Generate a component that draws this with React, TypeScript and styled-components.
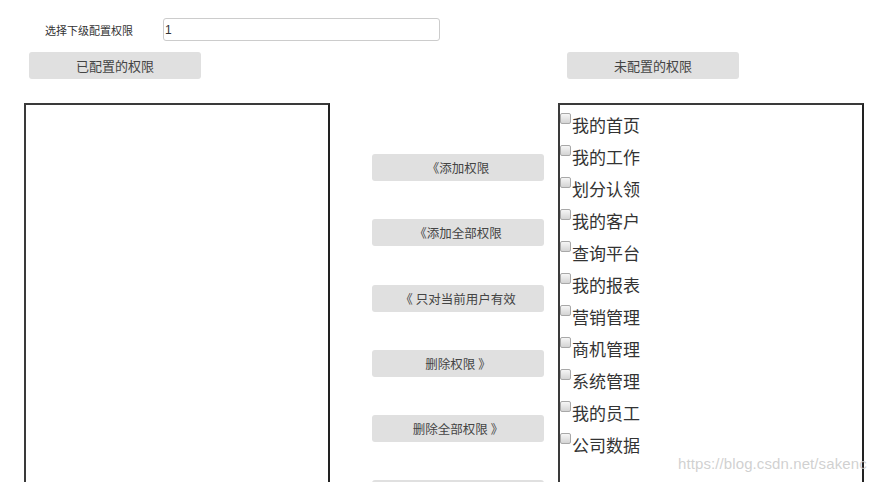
import React from 'react'
import styled, { createGlobalStyle } from 'styled-components'

const GlobalStyle = createGlobalStyle`
    html, body {
        margin: 0;
        padding: 0;
        background: #fff;
        overflow: hidden;
    }
    body {
        font-family: "Noto Sans CJK SC", "Noto Sans", "Liberation Sans", sans-serif;
        color: #333;
    }
`

const Page = styled.div`
    position: relative;
    width: 883px;
    height: 482px;
    overflow: hidden;
`

const FilterRow = styled.div`
    display: flex;
    align-items: center;
    padding: 18px 0 0 45px;
    height: 23px;
`

const FilterLabel = styled.label`
    width: 118px;
    font-size: 11px;
    color: #333;
`

const FilterInput = styled.input`
    box-sizing: border-box;
    width: 277px;
    height: 23px;
    padding: 0 1px;
    border: 1px solid #ccc;
    border-radius: 3px;
    font-family: "Liberation Sans", sans-serif;
    font-size: 12px;
    color: #333;
    outline: none;
`

const Columns = styled.div`
    display: grid;
    grid-template-columns: 306px 214px 320px;
    padding: 11px 0 0 24px;
`

const Column = styled.div<{ gapLeft?: number }>`
    display: flex;
    flex-direction: column;
    margin-left: ${({ gapLeft }) => gapLeft ?? 0}px;
`

const GrayButton = styled.button<{ offset?: number }>`
    box-sizing: border-box;
    flex: none;
    width: 172px;
    height: 27px;
    margin-left: ${({ offset }) => offset ?? 0}px;
    border: none;
    border-radius: 3px;
    background: #e0e0e0;
    color: #444;
    font-family: "Noto Sans CJK SC", sans-serif;
    font-size: 12.5px;
    padding: 0;
    cursor: pointer;
`

const HeaderButton = styled(GrayButton)`
    font-size: 13px;
`

const Box = styled.div`
    box-sizing: border-box;
    width: 306px;
    height: 420px;
    margin-top: 24px;
    border: 2px solid #222;
    border-top-color: #3a3a3a;
    border-left-color: #3a3a3a;
    box-shadow: inset 1px 1px 0 #fff;
    padding: 4px 0 0 0;
`

const Actions = styled.div`
    display: flex;
    flex-direction: column;
    gap: 38.3px;
    margin: 102px 0 0 42px;
`

const Item = styled.div`
    display: flex;
    align-items: flex-start;
    height: 32px;
    line-height: 31px;
    font-size: 17px;
    color: #333;
`

const Check = styled.span`
    box-sizing: border-box;
    flex: none;
    width: 11px;
    height: 11px;
    margin: 4px 1px 0 0;
    border: 1px solid #a8a8a8;
    border-radius: 2px;
    background: linear-gradient(#f6f6f6, #d4d4d4);
`

const Watermark = styled.div`
    position: absolute;
    left: 678px;
    top: 455px;
    font-family: "Liberation Sans", sans-serif;
    font-size: 15px;
    color: rgba(200, 200, 200, 0.85);
    letter-spacing: 0.1px;
    pointer-events: none;
`

const permissions = [
    '我的首页',
    '我的工作',
    '划分认领',
    '我的客户',
    '查询平台',
    '我的报表',
    '营销管理',
    '商机管理',
    '系统管理',
    '我的员工',
    '公司数据',
]

const actions = ['《添加权限', '《添加全部权限', '《 只对当前用户有效', '删除权限 》', '删除全部权限 》', '']

export default function App() {
    return (
        <Page>
            <GlobalStyle />
            <FilterRow>
                <FilterLabel>选择下级配置权限</FilterLabel>
                <FilterInput defaultValue="1" />
            </FilterRow>
            <Columns>
                <Column>
                    <HeaderButton offset={5}>已配置的权限</HeaderButton>
                    <Box />
                </Column>
                <Actions>
                    {actions.map((a, i) => (
                        <GrayButton key={i}>{a}</GrayButton>
                    ))}
                </Actions>
                <Column gapLeft={14}>
                    <HeaderButton offset={9}>未配置的权限</HeaderButton>
                    <Box>
                        {permissions.map((p) => (
                            <Item key={p}>
                                <Check />
                                {p}
                            </Item>
                        ))}
                    </Box>
                </Column>
            </Columns>
            <Watermark>https://blog.csdn.net/sakenc</Watermark>
        </Page>
    )
}
